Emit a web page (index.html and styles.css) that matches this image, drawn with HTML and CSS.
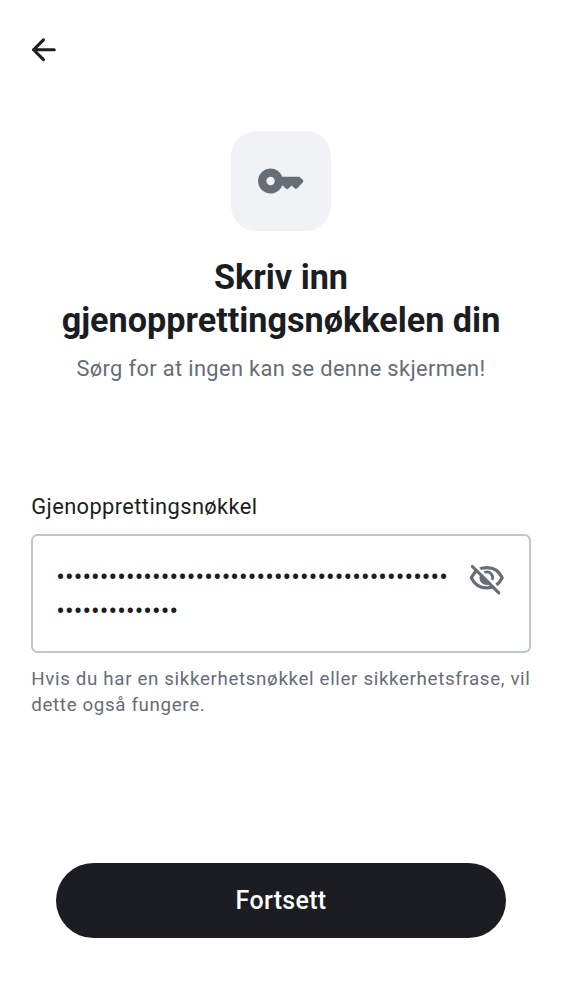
FILE: index.html
```html
<!DOCTYPE html>
<html lang="nb">
<head>
<meta charset="utf-8">
<meta name="viewport" content="width=device-width, initial-scale=1">
<title>Gjenopprettingsnøkkel</title>
<link rel="stylesheet" href="styles.css">
</head>
<body>
<div class="screen">
  <header class="topbar">
    <svg class="back" viewBox="0 0 24 24" fill="none" stroke="currentColor" stroke-width="2" stroke-linecap="round" stroke-linejoin="round"><path d="M18.700 12H5.400M11.800 5.700l-6.300 6.300 6.300 6.300"/></svg>
  </header>
  <main class="content">
    <div class="badge">
      <svg class="key" viewBox="0 0 24 24" fill="currentColor" fill-rule="evenodd"><path d="M12.65 10H20.6a1 1 0 0 1 .7.3l1.1 1.05a.95.95 0 0 1 0 1.35l-2.6 2.8a.85.85 0 0 1-1.25 0L17.1 14.1l-1.5 1.5a.9.9 0 0 1-1.3 0L12.65 14A6 6 0 1 1 12.65 10ZM7 10a2 2 0 1 0 0 4a2 2 0 0 0 0-4Z"/></svg>
    </div>
    <h1 class="title">Skriv inn<br>gjenopprettingsnøkkelen din</h1>
    <p class="subtitle">Sørg for at ingen kan se denne skjermen!</p>
    <section class="field">
      <div class="label">Gjenopprettingsnøkkel</div>
      <div class="input">
        <div class="dots">•••••••••••••••••••••••••••••••••••••••••••••<br>••••••••••••••</div>
        <svg class="eye" viewBox="0 0 24 24" fill="none" stroke="currentColor" stroke-width="2">
          <path d="M2.1 12C4 7.900 7.700 5.500 12 5.500S20 7.900 21.900 12C20 16.100 16.300 18.500 12 18.500S4 16.100 2.100 12Z" stroke-linejoin="round"/>
          <path d="M8.600 8.800A4.500 4.500 0 1 0 15.300 15.200Z" fill="currentColor" stroke="none"/>
          <path d="M10.500 8.700A3.600 3.600 0 0 1 15.400 13.400" stroke-width="1.800"/>
          <path class="gap" d="M4 3.600L21 20.600"/>
          <path d="M2.800 4.800L19.700 21.700" stroke-linecap="round"/>
        </svg>
      </div>
      <p class="help">Hvis du har en sikkerhetsnøkkel eller sikkerhetsfrase, vil dette også fungere.</p>
    </section>
  </main>
  <button class="submit" type="button">Fortsett</button>
</div>
</body>
</html>
```
FILE: styles.css
```css
* { box-sizing: border-box; }
body { margin: 0; background: #fff; font-family: Roboto, sans-serif; color: #1b1d22; }
.screen { height: 1000px; display: flex; flex-direction: column; padding: 0 31px 62.5px; }
.topbar { height: 100px; display: flex; align-items: center; margin-left: -6px; }
.back { width: 37.5px; height: 37.5px; }
.content { flex: 1; padding-top: 31px; }
.badge { width: 100px; height: 100px; margin: 0 auto; border-radius: 25px; background: #f0f2f5; color: #656d77; display: flex; align-items: center; justify-content: center; }
.key { width: 50px; height: 50px; }
.title { margin: 25px -10px 0; text-align: center; font-size: 34.2px; line-height: 43px; font-weight: 700; }
.subtitle { margin: 11px 0 0; text-align: center; font-size: 21.85px; line-height: 31px; letter-spacing: .35px; color: #656d77; }
.field { margin-top: 107px; }
.label { font-size: 21.85px; line-height: 31px; letter-spacing: .39px; padding-left: .3px; }
.input { margin-top: 12px; height: 119px; border: 2px solid #bfc5cf; border-radius: 6.5px; display: flex; justify-content: space-between; padding: 22.5px 24px 0 23.3px; }
.dots { font-size: 25.5px; line-height: 34.35px; letter-spacing: .1px; white-space: nowrap; padding-top: 1px; }
.eye { width: 37.5px; height: 37.5px; flex: none; color: #656d77; }
.gap { stroke: #fff; stroke-width: 1.6; }
.help { margin: 12.6px -10px 0 .3px; font-size: 18.75px; line-height: 26.5px; letter-spacing: .64px; color: #656d77; }
.submit { height: 75px; margin: 0 25px; border: 0; border-radius: 38px; background: #1b1d22; color: #fff; font: 500 25px/37px Roboto, sans-serif; letter-spacing: .3px; }
```
